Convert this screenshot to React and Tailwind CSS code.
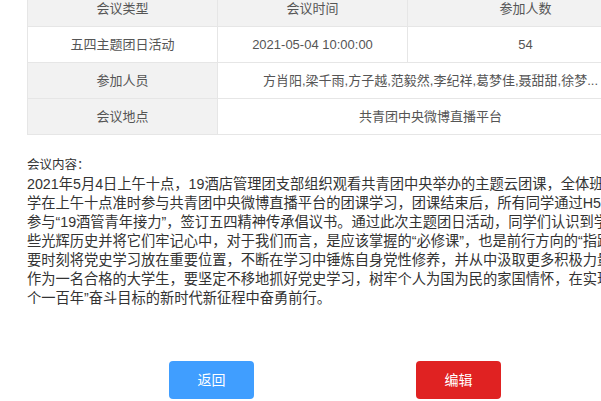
import React from "react";

const font = { fontFamily: '"Liberation Sans","Noto Sans CJK SC",sans-serif' };

const lines = [
  "2021年5月4日上午十点，19酒店管理团支部组织观看共青团中央举办的主题云团课，全体班级同",
  "学在上午十点准时参与共青团中央微博直播平台的团课学习，团课结束后，所有同学通过H5页面",
  "参与“19酒管青年接力”，签订五四精神传承倡议书。通过此次主题团日活动，同学们认识到学习党史",
  "些光辉历史并将它们牢记心中，对于我们而言，是应该掌握的“必修课”，也是前行方向的“指路明灯”。",
  "要时刻将党史学习放在重要位置，不断在学习中锤炼自身党性修养，并从中汲取更多积极力量。我们",
  "作为一名合格的大学生，要坚定不移地抓好党史学习，树牢个人为国为民的家国情怀，在实现第二",
  "个一百年”奋斗目标的新时代新征程中奋勇前行。",
];

export default function App() {
  const cell = "border border-[#e6e6e6] text-center align-middle px-2 whitespace-nowrap overflow-hidden";
  return (
    <div className="w-[601px] h-[401px] overflow-hidden bg-white" style={font}>
      <div className="w-[616px] ml-[27px] -mt-[10px]">
        <table className="w-[616px] border-collapse table-fixed text-[13px] text-[#555]">
          <colgroup>
            <col className="w-[190px]" />
            <col className="w-[190px]" />
            <col className="w-[236px]" />
          </colgroup>
          <tbody>
            <tr className="h-[36px] bg-[#f2f2f2]">
              <td className={cell}>会议类型</td>
              <td className={cell}>会议时间</td>
              <td className={cell}>参加人数</td>
            </tr>
            <tr className="h-[36px] bg-white">
              <td className={cell}>五四主题团日活动</td>
              <td className={cell}>2021-05-04 10:00:00</td>
              <td className={cell}>54</td>
            </tr>
            <tr className="h-[36px]">
              <td className={cell + " bg-[#f2f2f2]"}>参加人员</td>
              <td className={cell + " bg-white"} colSpan={2}>
                方肖阳,梁千雨,方子越,范毅然,李纪祥,葛梦佳,聂甜甜,徐梦...
              </td>
            </tr>
            <tr className="h-[36px]">
              <td className={cell + " bg-[#f2f2f2]"}>会议地点</td>
              <td className={cell + " bg-white"} colSpan={2}>
                共青团中央微博直播平台
              </td>
            </tr>
          </tbody>
        </table>

        <div className="mt-[21px] text-[#333]">
          <div className="text-[12.5px] leading-[19px]">会议内容：</div>
          <div className="text-[14.25px] leading-[19px]">
            {lines.map((l, i) => (
              <div key={i} className="whitespace-nowrap">{l}</div>
            ))}
          </div>
        </div>

        <div className="mt-[53px] flex justify-center gap-[162px]">
          <button className="w-[85px] h-[38px] rounded-[4px] bg-[#409eff] text-white text-[14px]">返回</button>
          <button className="w-[85px] h-[38px] rounded-[4px] bg-[#e02222] text-white text-[14px]">编辑</button>
        </div>
      </div>
    </div>
  );
}
